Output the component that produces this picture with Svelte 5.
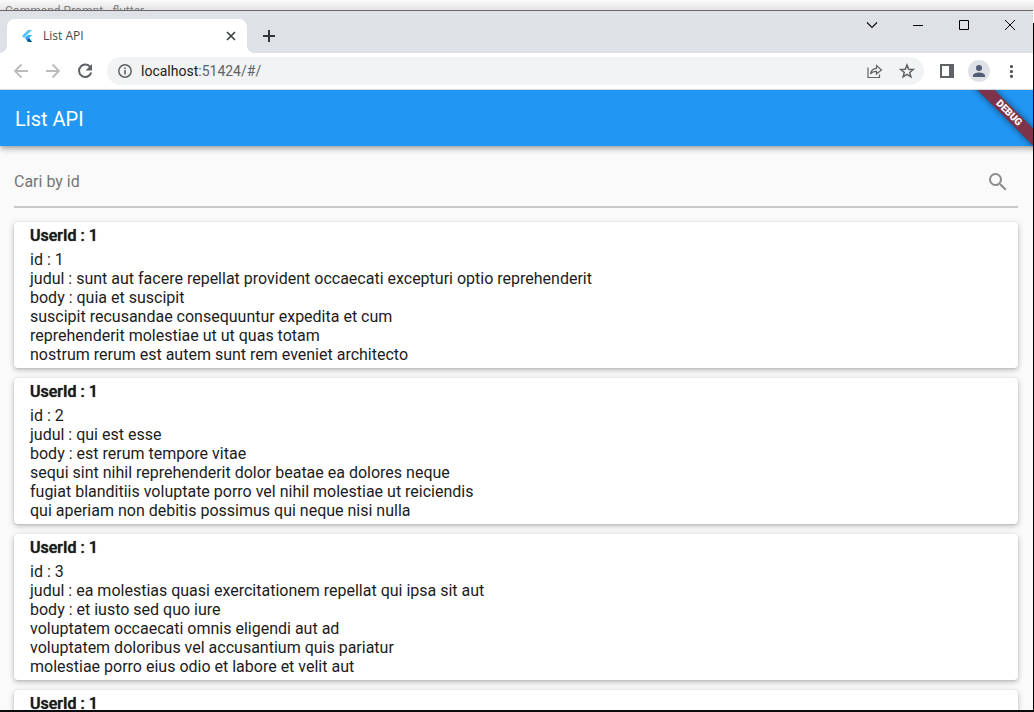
<script>
  const posts = [
    {
      userId: 1,
      id: 1,
      title: 'sunt aut facere repellat provident occaecati excepturi optio reprehenderit',
      body: 'quia et suscipit\nsuscipit recusandae consequuntur expedita et cum\nreprehenderit molestiae ut ut quas totam\nnostrum rerum est autem sunt rem eveniet architecto'
    },
    {
      userId: 1,
      id: 2,
      title: 'qui est esse',
      body: 'est rerum tempore vitae\nsequi sint nihil reprehenderit dolor beatae ea dolores neque\nfugiat blanditiis voluptate porro vel nihil molestiae ut reiciendis\nqui aperiam non debitis possimus qui neque nisi nulla'
    },
    {
      userId: 1,
      id: 3,
      title: 'ea molestias quasi exercitationem repellat qui ipsa sit aut',
      body: 'et iusto sed quo iure\nvoluptatem occaecati omnis eligendi aut ad\nvoluptatem doloribus vel accusantium quis pariatur\nmolestiae porro eius odio et labore et velit aut'
    },
    { userId: 1 }
  ];
  let query = $state('');
  let address = $state('localhost:51424/#/');
  let host = $derived(address.split(':')[0]);
  let rest = $derived(address.slice(host.length));
</script>

<div class="desktop">
  <div class="behind">Command Prompt - flutter</div>
  <div class="window">
    <header class="tabstrip">
      <div class="tab">
        <svg class="flutter" width="16" height="16" viewBox="0 0 16 16" aria-hidden="true">
          <path d="M9 2h4L5 10 3 8z" fill="#54c5f8" />
          <path d="M9 7h4l-3 3 3 4H9L6 10z" fill="#29b6f6" />
          <path d="M6 10l2-2 2 2-2 2z" fill="#42a5f5" />
          <path d="M8 12l2-2 3 4H9z" fill="#01579b" />
        </svg>
        <span class="tab-title">List API</span>
        <button class="plain" aria-label="Close tab">
          <svg width="10" height="10" viewBox="0 0 10 10"><path d="M1 1l8 8M9 1L1 9" stroke="#3c4043" stroke-width="1.7" /></svg>
        </button>
      </div>
      <button class="plain newtab" aria-label="New tab">
        <svg width="14" height="14" viewBox="0 0 14 14"><path d="M7 1v12M1 7h12" stroke="#333639" stroke-width="2" /></svg>
      </button>
      <div class="controls">
        <button class="plain" aria-label="Search tabs"><svg width="12" height="12" viewBox="0 0 12 12"><path d="M1 3.5l5 5 5-5" fill="none" stroke="#111" stroke-width="1.2" /></svg></button>
        <button class="plain" aria-label="Minimize"><svg width="12" height="12" viewBox="0 0 12 12"><path d="M1 6.5h10" stroke="#000" /></svg></button>
        <button class="plain" aria-label="Maximize"><svg width="12" height="12" viewBox="0 0 12 12"><path d="M1.500 1.500h9v9h-9z" fill="none" stroke="#000" /></svg></button>
        <button class="plain" aria-label="Close"><svg width="12" height="12" viewBox="0 0 12 12"><path d="M1 1l10 10M11 1L1 11" stroke="#000" /></svg></button>
      </div>
    </header>

    <nav class="toolbar">
      <button class="plain" aria-label="Back"><svg width="16" height="16" viewBox="0 0 16 16"><path d="M15 8H2M8.500 1.500L2 8l6.500 6.500" fill="none" stroke="#b9bbbd" stroke-width="1.800" /></svg></button>
      <button class="plain" aria-label="Forward"><svg width="16" height="16" viewBox="0 0 16 16"><path d="M1 8h13M7.500 1.500L14 8l-6.500 6.500" fill="none" stroke="#b9bbbd" stroke-width="1.800" /></svg></button>
      <button class="plain" aria-label="Reload"><svg width="16" height="16" viewBox="0 0 16 16"><path d="M13.500 4.500A6.200 6.200 0 1 0 14.200 9.500" fill="none" stroke="#5f6368" stroke-width="2" /><path d="M15 1v6.500H8.500z" fill="#5f6368" /></svg></button>
      <div class="omnibox">
        <svg width="14" height="14" viewBox="0 0 14 14" aria-hidden="true"><circle cx="7" cy="7" r="6.200" fill="none" stroke="#5f6368" stroke-width="1.500" /><path d="M7 6v4.500M7 3.500V5" stroke="#5f6368" stroke-width="1.600" /></svg>
        <div class="address">
          <span aria-hidden="true"><b>{host}</b>{rest}</span>
          <input type="text" aria-label="Address" bind:value={address} />
        </div>
        <button class="plain" aria-label="Share"><svg width="16" height="16" viewBox="0 0 16 16"><path d="M1 4.500v10h11.500v-3M3.500 11c.5-3.500 2.500-5.500 6-5.700V2.500L14.500 7 9.500 11V8.400C7 8.400 5 9 3.500 11z" fill="none" stroke="#5f6368" stroke-width="1.200" /></svg></button>
        <button class="plain" aria-label="Bookmark"><svg width="16" height="16" viewBox="0 0 16 16"><path d="M8 2l1.700 4.200 4.500.3-3.500 2.900 1.200 4.400L8 11.400l-3.900 2.400 1.200-4.400-3.500-2.900 4.500-.3z" fill="none" stroke="#5f6368" stroke-width="1.500" /></svg></button>
      </div>
      <button class="plain" aria-label="Side panel"><svg width="14" height="14" viewBox="0 0 14 14"><path d="M0 0h14v14H0zM2 2v10h7V2z" fill="#5f6368" fill-rule="evenodd" /></svg></button>
      <button class="plain avatar" aria-label="Profile"><svg width="22" height="22" viewBox="0 0 22 22"><circle cx="11" cy="8" r="3" fill="#525c75" /><path d="M5 17v-1.500C5 13.300 8.500 12.400 11 12.400s6 .9 6 3.100V17z" fill="#525c75" /></svg></button>
      <button class="plain" aria-label="Menu"><svg width="4" height="14" viewBox="0 0 4 14"><g fill="#505357"><circle cx="1.500" cy="2.500" r="1.600" /><circle cx="1.500" cy="7.500" r="1.600" /><circle cx="1.500" cy="12.300" r="1.600" /></g></svg></button>
    </nav>

    <main class="app">
      <header class="appbar"><h1>List API</h1></header>
      <div class="banner"><span>DEBUG</span></div>
      <div class="search">
        <input type="text" placeholder="Cari by id" aria-label="Cari by id" bind:value={query} />
        <button class="plain" aria-label="Search"><svg width="24" height="24" viewBox="0 0 24 24"><path fill="#8c8c8c" d="M15.500 14h-.79l-.28-.27A6.471 6.471 0 0 0 16 9.500 6.500 6.500 0 1 0 9.500 16c1.610 0 3.090-.59 4.230-1.570l.27.28v.79l5 4.990L20.490 19l-4.990-5zm-6 0C7.010 14 5 11.990 5 9.500S7.010 5 9.500 5 14 7.010 14 9.500 11.990 14 9.500 14z" /></svg></button>
      </div>
      <div class="list">
        {#each posts as post}
          <article class="card">
            <h2>UserId : {post.userId}</h2>
            {#if post.id}
              <p>id : {post.id}</p>
              <p>judul : {post.title}</p>
              <p>body : {post.body}</p>
            {/if}
          </article>
        {/each}
      </div>
    </main>
  </div>
</div>

<style>
  :global(body) {
    margin: 0;
  }
  .desktop {
    position: relative;
    display: flex;
    flex-direction: column;
    height: 100vh;
    overflow: hidden;
    box-sizing: border-box;
    border-bottom: 2px solid #0b0c10;
    background: #fafafa;
    font-family: Roboto, sans-serif;
  }
  .desktop::after {
    content: '';
    position: absolute;
    top: 23px;
    right: 0;
    bottom: 0;
    width: 1px;
    background: #000;
  }
  .behind {
    flex: none;
    height: 10px;
    overflow: hidden;
    padding: 0 5px;
    background: linear-gradient(#fafafa, #e4e4e4);
    color: #808080;
    font: 12px/22px Roboto, sans-serif;
  }
  .window {
    flex: 1;
    min-height: 0;
    display: flex;
    flex-direction: column;
    margin-right: 1px;
    border-top: 1px solid #66686b;
  }
  .plain {
    display: flex;
    align-items: center;
    justify-content: center;
    padding: 0;
    border: 0;
    background: none;
  }
  .tabstrip {
    flex: none;
    display: flex;
    height: 42px;
    padding-left: 7px;
    background: #dee1e6;
  }
  .tab {
    position: relative;
    display: flex;
    align-items: center;
    gap: 8px;
    box-sizing: border-box;
    width: 240px;
    height: 34px;
    margin-top: 8px;
    padding: 0 11px 0 12px;
    border-radius: 8px 8px 0 0;
    background: #fff;
  }
  .tab::before,
  .tab::after {
    content: '';
    position: absolute;
    bottom: 0;
    width: 8px;
    height: 8px;
  }
  .tab::before {
    right: 100%;
    background: radial-gradient(circle at 0 0, #dee1e6 8px, #fff 8px);
  }
  .tab::after {
    left: 100%;
    background: radial-gradient(circle at 100% 0, #dee1e6 8px, #fff 8px);
  }
  .tab-title {
    flex: 1;
    color: #45474a;
    font: 12px/16px 'Open Sans', sans-serif;
  }
  .newtab {
    width: 28px;
    height: 28px;
    margin: 11px 0 0 8px;
  }
  .controls {
    display: flex;
    height: 28px;
    margin-left: auto;
  }
  .controls button {
    width: 46px;
  }
  .toolbar {
    flex: none;
    display: flex;
    align-items: center;
    gap: 16px;
    height: 36px;
    padding: 0 19px 0 13px;
    border-bottom: 1px solid #d5d9dd;
    background: #fff;
  }
  .omnibox {
    flex: 1;
    display: flex;
    align-items: center;
    gap: 16px;
    height: 28px;
    margin-left: -2px;
    padding: 0 9px 0 11px;
    border-radius: 14px;
    background: #f1f3f4;
  }
  .address {
    flex: 1;
    display: grid;
    margin-left: -7px;
    color: #5f6368;
    font: 14px/20px Roboto, sans-serif;
  }
  .address b {
    color: #202124;
    font-weight: 400;
  }
  .address span,
  .address input {
    grid-area: 1 / 1;
  }
  .address input {
    width: 100%;
    min-width: 0;
    padding: 0;
    border: 0;
    outline: 0;
    background: none;
    color: transparent;
    caret-color: #202124;
    font: inherit;
  }
  .avatar {
    width: 22px;
    height: 22px;
    margin: 0 4px 0 -2px;
    border-radius: 50%;
    background: #dee1e6;
  }
  .app {
    position: relative;
    flex: 1;
    min-height: 0;
    overflow: hidden;
    background: #fafafa;
  }
  .appbar {
    display: flex;
    align-items: center;
    box-sizing: border-box;
    height: 56px;
    padding: 2px 15px 0;
    background: #2196f3;
    box-shadow: 0 2px 4px -1px #0003, 0 4px 5px #00000024, 0 1px 10px #0000001f;
  }
  h1 {
    margin: 0;
    color: #fff;
    font-size: 20px;
    font-weight: 400;
    line-height: 24px;
  }
  .banner {
    position: absolute;
    top: 0;
    right: 0;
    width: 80px;
    height: 80px;
    overflow: hidden;
  }
  .banner span {
    position: absolute;
    top: 17px;
    right: -36px;
    width: 120px;
    transform: rotate(45deg);
    background: #7d334a;
    box-shadow: 0 0 6px #0000007f;
    color: #fff;
    font-size: 10px;
    font-weight: 900;
    line-height: 12px;
    text-align: center;
  }
  .search {
    display: flex;
    align-items: center;
    height: 48px;
    margin: 12px 15px 14px 14px;
    border-bottom: 2px solid #c8c8c8;
  }
  .search input {
    flex: 1;
    min-width: 0;
    box-sizing: border-box;
    height: 48px;
    padding: 0 0 2px;
    border: 0;
    outline: 0;
    background: none;
    color: #212121;
    font: 16px/20px Roboto, sans-serif;
  }
  .search input::placeholder {
    color: #757575;
    opacity: 1;
  }
  .search button {
    width: 40px;
    height: 48px;
  }
  .list {
    display: flex;
    flex-direction: column;
    gap: 10px;
    padding: 0 15px 0 14px;
  }
  .card {
    padding: 4px 16px;
    border-radius: 4px;
    background: #fff;
    box-shadow: 0 2px 6px #00000038, 0 1px 3px #00000020;
    color: #1c1c1c;
    font-size: 16px;
    line-height: 19px;
  }
  .card h2 {
    margin: 0 0 5px;
    font-size: 16px;
    font-weight: 500;
    line-height: 19px;
    text-shadow: 0 0 1px #1c1c1c;
  }
  .card p {
    margin: 0;
    white-space: pre-line;
  }
</style>
